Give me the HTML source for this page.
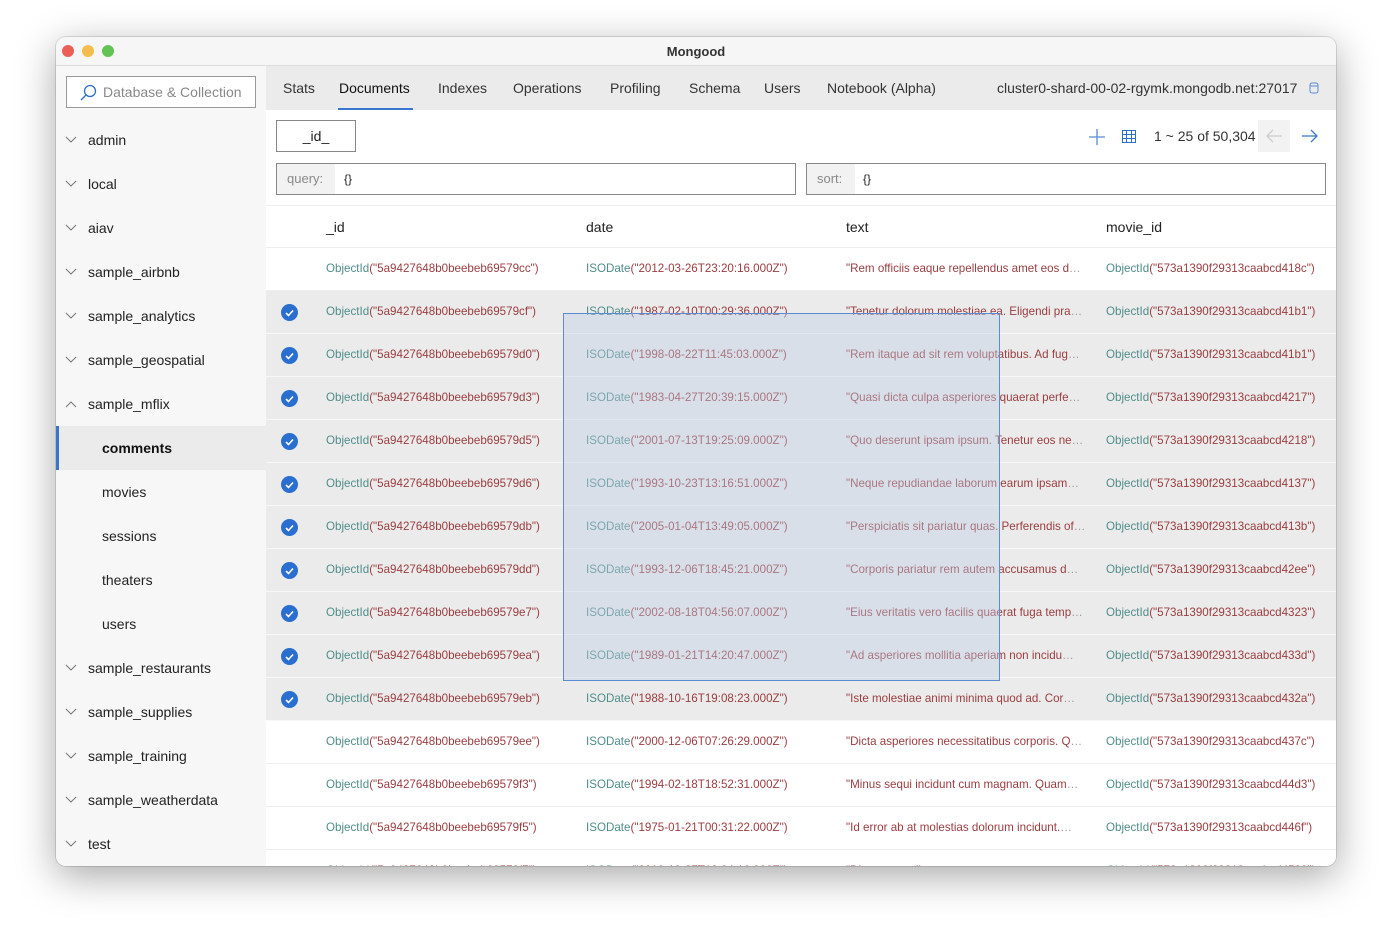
<!DOCTYPE html>
<html><head><meta charset="utf-8"><style>
*{box-sizing:border-box;margin:0;padding:0}
body{width:1392px;height:940px;background:#fff;font-family:"Liberation Sans",sans-serif;position:relative;overflow:hidden;color:#222}
.win{position:absolute;left:56px;top:37px;width:1280px;height:829px;border-radius:10px;overflow:hidden;box-shadow:0 10px 40px rgba(0,0,0,.35),0 0 0 1px rgba(0,0,0,.12);background:#fff}
.title{position:absolute;left:0;top:0;width:100%;height:29px;background:#f6f6f6;border-bottom:1px solid #ddd;text-align:center;font-size:13px;font-weight:bold;line-height:29px;color:#333}
.dot{position:absolute;top:8px;width:12px;height:12px;border-radius:50%}
.side{position:absolute;left:0;top:29px;width:210px;bottom:0;background:#f7f7f7}
.search{position:absolute;left:10px;top:10px;width:190px;height:32px;border:1px solid #999;background:#fff;font-size:14px;color:#888;line-height:30px;padding-left:36px}
.si{position:absolute;left:0;width:210px;height:44px;font-size:14px;line-height:44px;color:#222}
.tabs{position:absolute;left:210px;top:29px;right:0;height:44px;background:#ebebeb;font-size:14px;color:#333}
.tab{position:absolute;top:0;line-height:44px}
.main{position:absolute;left:210px;top:73px;right:0;bottom:0;background:#fff}
.cell{position:absolute;font-size:11.6px;white-space:nowrap;color:#9a3d40}
.g{color:#4f8d8a}
.row{position:absolute;left:0;width:1070px;height:43px;border-bottom:1px solid #eee}
.chk{position:absolute;left:15px;top:13px;width:17px;height:17px;border-radius:50%;background:#2a6fd0}
</style></head><body>
<div class="win">
<div class="title">Mongood
<div class="dot" style="left:6px;background:#ec5f57"></div><div class="dot" style="left:26px;background:#f4be4f"></div><div class="dot" style="left:46px;background:#61c454"></div></div>
<div class="side">
<div class="search"><svg style="position:absolute;left:12px;top:7px" width="18" height="18" viewBox="0 0 18 18"><circle cx="11" cy="7" r="5.5" fill="none" stroke="#2a6fd0" stroke-width="1.3"/><path d="M7 11L2 16" stroke="#2a6fd0" stroke-width="1.3"/></svg>Database &amp; Collection</div>
</div>
<div class="tabs">
<div class="tab" style="left:17px">Stats</div>
<div class="tab" style="left:73px;color:#111">Documents</div>
<div style="position:absolute;left:72px;top:42px;width:75px;height:2px;background:#3a76d0"></div>
<div class="tab" style="left:172px">Indexes</div>
<div class="tab" style="left:247px">Operations</div>
<div class="tab" style="left:344px">Profiling</div>
<div class="tab" style="left:423px">Schema</div>
<div class="tab" style="left:498px">Users</div>
<div class="tab" style="left:561px">Notebook (Alpha)</div>
<div class="tab" style="left:731px">cluster0-shard-00-02-rgymk.mongodb.net:27017</div>
<svg style="position:absolute;left:1043px;top:16px" width="10" height="12" viewBox="0 0 10 12"><rect x="1" y="1" width="8" height="10" rx="2" fill="none" stroke="#5b8bd0"/><path d="M1 4h8" stroke="#5b8bd0"/></svg>
</div>
<div class="main">
<div style="position:absolute;left:10px;top:10px;width:80px;height:32px;border:1px solid #888;text-align:center;line-height:30px;font-size:14px">_id_</div>
<svg style="position:absolute;left:822px;top:18px" width="18" height="18"><path d="M9 1v16M1 9h16" stroke="#5b8bd0" stroke-width="1.3"/></svg>
<svg style="position:absolute;left:856px;top:20px" width="14" height="13"><rect x=".5" y=".5" width="13" height="12" fill="none" stroke="#2a6fd0"/><path d="M0.5 4.5h13M.5 8.5h13M4.5 .5v12M9.5.5v12" stroke="#2a6fd0"/></svg>
<div style="position:absolute;left:888px;top:18px;font-size:14px;color:#333">1 ~ 25 of 50,304</div>
<div style="position:absolute;left:992px;top:10px;width:32px;height:32px;background:#f2f2f2"></div>
<svg style="position:absolute;left:999px;top:18px" width="18" height="16"><path d="M17 8H2M8 2L2 8l6 6" fill="none" stroke="#ccc" stroke-width="1.3"/></svg>
<svg style="position:absolute;left:1035px;top:18px" width="18" height="16"><path d="M1 8h15M10 2l6 6-6 6" fill="none" stroke="#3a76d0" stroke-width="1.3"/></svg>
<div style="position:absolute;left:10px;top:53px;width:520px;height:32px;border:1px solid #888"><div style="position:absolute;left:0;top:0;width:58px;height:30px;background:#f2f2f2;font-size:13px;color:#888;line-height:30px;padding-left:10px">query:</div><span style="position:absolute;left:67px;top:8px;font-size:12px">{}</span></div>
<div style="position:absolute;left:540px;top:53px;width:520px;height:32px;border:1px solid #888"><div style="position:absolute;left:0;top:0;width:48px;height:30px;background:#f2f2f2;font-size:13px;color:#888;line-height:30px;padding-left:10px">sort:</div><span style="position:absolute;left:56px;top:8px;font-size:12px">{}</span></div>
<div style="position:absolute;left:0;top:95px;width:1070px;border-top:1px solid #eee;height:43px;border-bottom:1px solid #eee;font-size:14px">
<span style="position:absolute;left:60px;top:13px">_id</span><span style="position:absolute;left:320px;top:13px">date</span><span style="position:absolute;left:580px;top:13px">text</span><span style="position:absolute;left:840px;top:13px">movie_id</span></div>
<div id="rows"></div>
<div style="position:absolute;left:297px;top:203px;width:437px;height:368px;background:rgba(190,205,228,.4);border:1px solid #5b8bd0"></div>
</div>
<div class="side" style="background:transparent;pointer-events:none" id="sidelist"></div>
</div>
<script>
var dbs=[["admin",0],["local",0],["aiav",0],["sample_airbnb",0],["sample_analytics",0],["sample_geospatial",0],["sample_mflix",1],["comments",2],["movies",3],["sessions",3],["theaters",3],["users",3],["sample_restaurants",0],["sample_supplies",0],["sample_training",0],["sample_weatherdata",0],["test",0]];
var h="";dbs.forEach(function(d,i){var top=52+44*i;
if(d[1]==2)h+='<div class="si" style="top:'+top+'px;background:#ebebeb;border-left:3px solid #3a76d0"><span style="position:absolute;left:43px;font-weight:bold;color:#111">'+d[0]+'</span></div>';
else if(d[1]==3)h+='<div class="si" style="top:'+top+'px"><span style="position:absolute;left:46px">'+d[0]+'</span></div>';
else h+='<div class="si" style="top:'+top+'px"><svg style="position:absolute;left:9px;top:18px" width="12" height="8"><path d="'+(d[1]==1?'M1 7l5-5 5 5':'M1 1l5 5 5-5')+'" fill="none" stroke="#777"/></svg><span style="position:absolute;left:32px">'+d[0]+'</span></div>';});
document.getElementById("sidelist").innerHTML=h;
var R=[["cc","2012-03-26T23:20:16","Rem officiis eaque repellendus amet eos d","418c"],["cf","1987-02-10T00:29:36","Tenetur dolorum molestiae ea. Eligendi pra","41b1"],["d0","1998-08-22T11:45:03","Rem itaque ad sit rem voluptatibus. Ad fug","41b1"],["d3","1983-04-27T20:39:15","Quasi dicta culpa asperiores quaerat perfe","4217"],["d5","2001-07-13T19:25:09","Quo deserunt ipsam ipsum. Tenetur eos ne","4218"],["d6","1993-10-23T13:16:51","Neque repudiandae laborum earum ipsam","4137"],["db","2005-01-04T13:49:05","Perspiciatis sit pariatur quas. Perferendis of","413b"],["dd","1993-12-06T18:45:21","Corporis pariatur rem autem accusamus d","42ee"],["e7","2002-08-18T04:56:07","Eius veritatis vero facilis quaerat fuga temp","4323"],["ea","1989-01-21T14:20:47","Ad asperiores mollitia aperiam non incidu","433d"],["eb","1988-10-16T19:08:23","Iste molestiae animi minima quod ad. Cor","432a"],["ee","2000-12-06T07:26:29","Dicta asperiores necessitatibus corporis. Q","437c"],["f3","1994-02-18T18:52:31","Minus sequi incidunt cum magnam. Quam","44d3"],["f5","1975-01-21T00:31:22","Id error ab at molestias dolorum incidunt.","446f"],["f7","2010-10-27T12:04:16","Dicta temporibus","4520"]];
var s="";R.forEach(function(r,i){var top=138+43*i,sel=i>=1&&i<=10;
s+='<div class="row" style="top:'+top+'px;background:'+(sel?'#ebebeb':'#fff')+';border-bottom-color:'+(sel?'#f8f8f8':'#eee')+'">'+(sel?'<div class="chk"><svg width="17" height="17"><path d="M5 9l2.5 2.5L12 6.5" fill="none" stroke="#fff" stroke-width="1.6"/></svg></div>':'')+
'<span class="cell" style="left:60px;top:14px"><span class="g">ObjectId</span>("5a9427648b0beebeb69579'+r[0]+'")</span>'+
'<span class="cell" style="left:320px;top:14px"><span class="g">ISODate</span>("'+r[1]+'.000Z")</span>'+
'<span class="cell" style="left:580px;top:14px">"'+r[2]+'<span style="color:#999">…</span></span>'+
'<span class="cell" style="left:840px;top:14px"><span class="g">ObjectId</span>("573a1390f29313caabcd'+r[3]+'")</span></div>';});
document.getElementById("rows").innerHTML=s;
</script>
</body></html>
